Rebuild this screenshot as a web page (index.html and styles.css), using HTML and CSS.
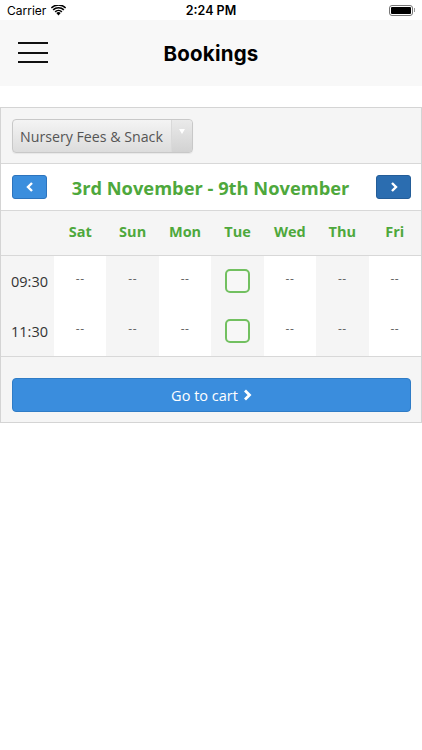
FILE: index.html
```html
<!DOCTYPE html>
<html lang="en">
<head>
    <meta charset="UTF-8">
    <meta name="viewport" content="width=device-width, initial-scale=1.0">
    <title>Bookings</title>
    <link rel="stylesheet" href="styles.css">
</head>
<body>

    <!-- iOS status bar -->
    <div class="status-bar">
        <div class="status-left">
            Carrier
            <svg class="wifi" width="15" height="11" viewBox="0 0 15 11">
                <path d="M7.5 10.5 L5.3 8.1 A3.2 3.2 0 0 1 9.7 8.1 Z" fill="#000"/>
                <path d="M3.6 6.3 A5.6 5.6 0 0 1 11.4 6.3 L10.3 7.4 A4.1 4.1 0 0 0 4.7 7.4 Z" fill="#000"/>
                <path d="M1.6 4.3 A8.4 8.4 0 0 1 13.4 4.3 L12.3 5.4 A6.9 6.9 0 0 0 2.7 5.4 Z" fill="#000"/>
                <path d="M-0.2 2.4 A11 11 0 0 1 15.2 2.4 L14.2 3.4 A9.6 9.6 0 0 0 0.8 3.4 Z" fill="#000"/>
            </svg>
        </div>
        <div class="status-time">2:24 PM</div>
        <div class="status-right">
            <div class="battery"><div class="battery-level"></div></div>
            <div class="battery-tip"></div>
        </div>
    </div>

    <!-- Navigation -->
    <header class="nav-bar">
        <div class="menu-icon">
            <span></span><span></span><span></span>
        </div>
        <h1 class="nav-title">Bookings</h1>
    </header>

    <div class="booking-panel">
        <div class="panel-top">
            <div class="select-box">
                <span class="select-label">Nursery Fees &amp; Snack</span>
                <span class="select-arrow"><span class="caret"></span></span>
            </div>
        </div>

        <div class="week-nav">
            <button class="week-btn prev">
                <svg width="8" height="10" viewBox="0 0 8 10"><path d="M6 1 L2 5 L6 9" fill="none" stroke="#fff" stroke-width="2.4"/></svg>
            </button>
            <div class="week-title">3rd November - 9th November</div>
            <button class="week-btn next">
                <svg width="8" height="10" viewBox="0 0 8 10"><path d="M2 1 L6 5 L2 9" fill="none" stroke="#fff" stroke-width="2.4"/></svg>
            </button>
        </div>

        <div class="slots">
            <div class="slot-row head">
                <div class="cell time"></div>
                <div class="cell">Sat</div>
                <div class="cell">Sun</div>
                <div class="cell">Mon</div>
                <div class="cell">Tue</div>
                <div class="cell">Wed</div>
                <div class="cell">Thu</div>
                <div class="cell">Fri</div>
            </div>
            <div class="slot-body">
                <div class="slot-row">
                    <div class="cell time">09:30</div>
                    <div class="cell empty">--</div>
                    <div class="cell empty shade">--</div>
                    <div class="cell empty">--</div>
                    <div class="cell shade"><span class="check"></span></div>
                    <div class="cell empty">--</div>
                    <div class="cell empty shade">--</div>
                    <div class="cell empty">--</div>
                </div>
                <div class="slot-row">
                    <div class="cell time">11:30</div>
                    <div class="cell empty">--</div>
                    <div class="cell empty shade">--</div>
                    <div class="cell empty">--</div>
                    <div class="cell shade"><span class="check"></span></div>
                    <div class="cell empty">--</div>
                    <div class="cell empty shade">--</div>
                    <div class="cell empty">--</div>
                </div>
            </div>
        </div>

        <div class="panel-footer">
            <button class="cart-btn">Go to cart
                <svg width="9" height="12" viewBox="0 0 9 12"><path d="M2 1.5 L6.5 6 L2 10.5" fill="none" stroke="#fff" stroke-width="2.8"/></svg>
            </button>
        </div>
    </div>

</body>
</html>
```

FILE: styles.css
```css
/* Bookings page */
* {
    box-sizing: border-box;
    margin: 0;
    padding: 0;
}

body {
    background: #fff;
    font-family: 'Open Sans', 'Noto Sans', sans-serif;
    color: #333;
    width: 422px;
}

/* Status bar */
.status-bar {
    height: 20px;
    display: flex;
    align-items: center;
    justify-content: space-between;
    padding: 0 7px;
    font-family: Inter, 'Liberation Sans', sans-serif;
    font-size: 12px;
    color: #000;
}

.status-left {
    display: flex;
    align-items: center;
    gap: 5px;
    width: 100px;
}

.status-time {
    font-weight: 600;
    font-size: 12.5px;
}

.status-right {
    width: 100px;
    display: flex;
    justify-content: flex-end;
    align-items: center;
}

.battery {
    width: 24px;
    height: 11px;
    border: 1px solid #777;
    border-radius: 3px;
    padding: 1px;
}

.battery-level {
    width: 100%;
    height: 100%;
    background: #000;
    border-radius: 1px;
}

.battery-tip {
    width: 1.5px;
    height: 4px;
    background: #999;
    margin-left: 1px;
}

/* Nav bar */
.nav-bar {
    height: 66px;
    background: #f8f8f8;
    display: flex;
    align-items: center;
    justify-content: center;
    position: relative;
}

.menu-icon {
    position: absolute;
    left: 18px;
    top: 22px;
    width: 30px;
    display: flex;
    flex-direction: column;
    gap: 7.5px;
}

.menu-icon span {
    display: block;
    height: 2px;
    background: #111;
}

.nav-title {
    font-family: Inter, 'Liberation Sans', sans-serif;
    font-size: 20.5px;
    font-weight: 700;
    color: #000;
    letter-spacing: 0.2px;
}

/* Booking panel */
.booking-panel {
    margin-top: 21px;
    width: 422px;
    border: 1px solid #d4d4d4;
}

.panel-top {
    background: #f5f5f5;
    padding: 11px 11px 10px;
    border-bottom: 1px solid #d8d8d8;
}

.select-box {
    width: 181px;
    height: 34px;
    border: 1px solid #c8c8c8;
    border-radius: 4px;
    background: linear-gradient(#f4f4f4, #dcdcdc);
    display: flex;
    align-items: stretch;
    box-shadow: 0 1px 1px rgba(0, 0, 0, 0.06);
}

.select-label {
    flex: 1;
    display: flex;
    align-items: center;
    padding-left: 7px;
    font-size: 14.2px;
    color: #555;
}

.select-arrow {
    width: 21px;
    border-left: 1px solid #d9d9d9;
    background: linear-gradient(#eaeaea, #d2d2d2);
    border-radius: 0 4px 4px 0;
    display: flex;
    justify-content: center;
    padding-top: 9px;
}

.caret {
    width: 0;
    height: 0;
    border-left: 3.5px solid transparent;
    border-right: 3.5px solid transparent;
    border-top: 5px solid #fff;
}

.week-nav {
    height: 47px;
    display: flex;
    align-items: center;
    justify-content: space-between;
    padding: 0 10px 0 11px;
    border-bottom: 1px solid #d8d8d8;
}

.week-btn {
    width: 35px;
    height: 24px;
    border: 1px solid #2d74bd;
    border-radius: 3px;
    background: #3b8edd;
    display: flex;
    align-items: center;
    justify-content: center;
}

.week-btn.next {
    background: #2b6db0;
    border-color: #245d98;
}

.week-title {
    font-size: 18.3px;
    font-weight: 700;
    color: #4ea83c;
    margin-right: 2px;
}

/* Slots grid */
.slot-row {
    display: grid;
    grid-template-columns: 53px repeat(7, 1fr);
}

.slot-row.head {
    height: 45px;
    background: #f5f5f5;
    border-bottom: 1px solid #d8d8d8;
}

.slot-row.head .cell {
    font-weight: 700;
    font-size: 14.5px;
    color: #4ea83c;
    padding-bottom: 3px;
}

.slot-body .slot-row {
    height: 50px;
}

.slot-body {
    border-bottom: 1px solid #d8d8d8;
}

.cell {
    display: flex;
    align-items: center;
    justify-content: center;
    color: #666;
}

.cell.empty {
    font-size: 12px;
    letter-spacing: 0.5px;
    padding-bottom: 6px;
}

.cell.shade,
.slot-body .cell.time {
    background: #f5f5f5;
}

.cell.time {
    font-size: 14.5px;
    color: #333;
    justify-content: flex-start;
    padding-left: 10px;
}

.check {
    width: 25px;
    height: 24px;
    border: 2px solid #72c060;
    border-radius: 5px;
    background: #f7f7f7;
}

.panel-footer {
    background: #f5f5f5;
    padding: 21px 10px 10px 11px;
}

.cart-btn {
    width: 100%;
    height: 34px;
    border: 1px solid #2f7cc6;
    border-radius: 4px;
    background: #3a8ddd;
    color: #fff;
    font-family: 'Open Sans', 'Noto Sans', sans-serif;
    font-size: 14.5px;
    display: flex;
    align-items: center;
    justify-content: center;
    gap: 5px;
}
```
